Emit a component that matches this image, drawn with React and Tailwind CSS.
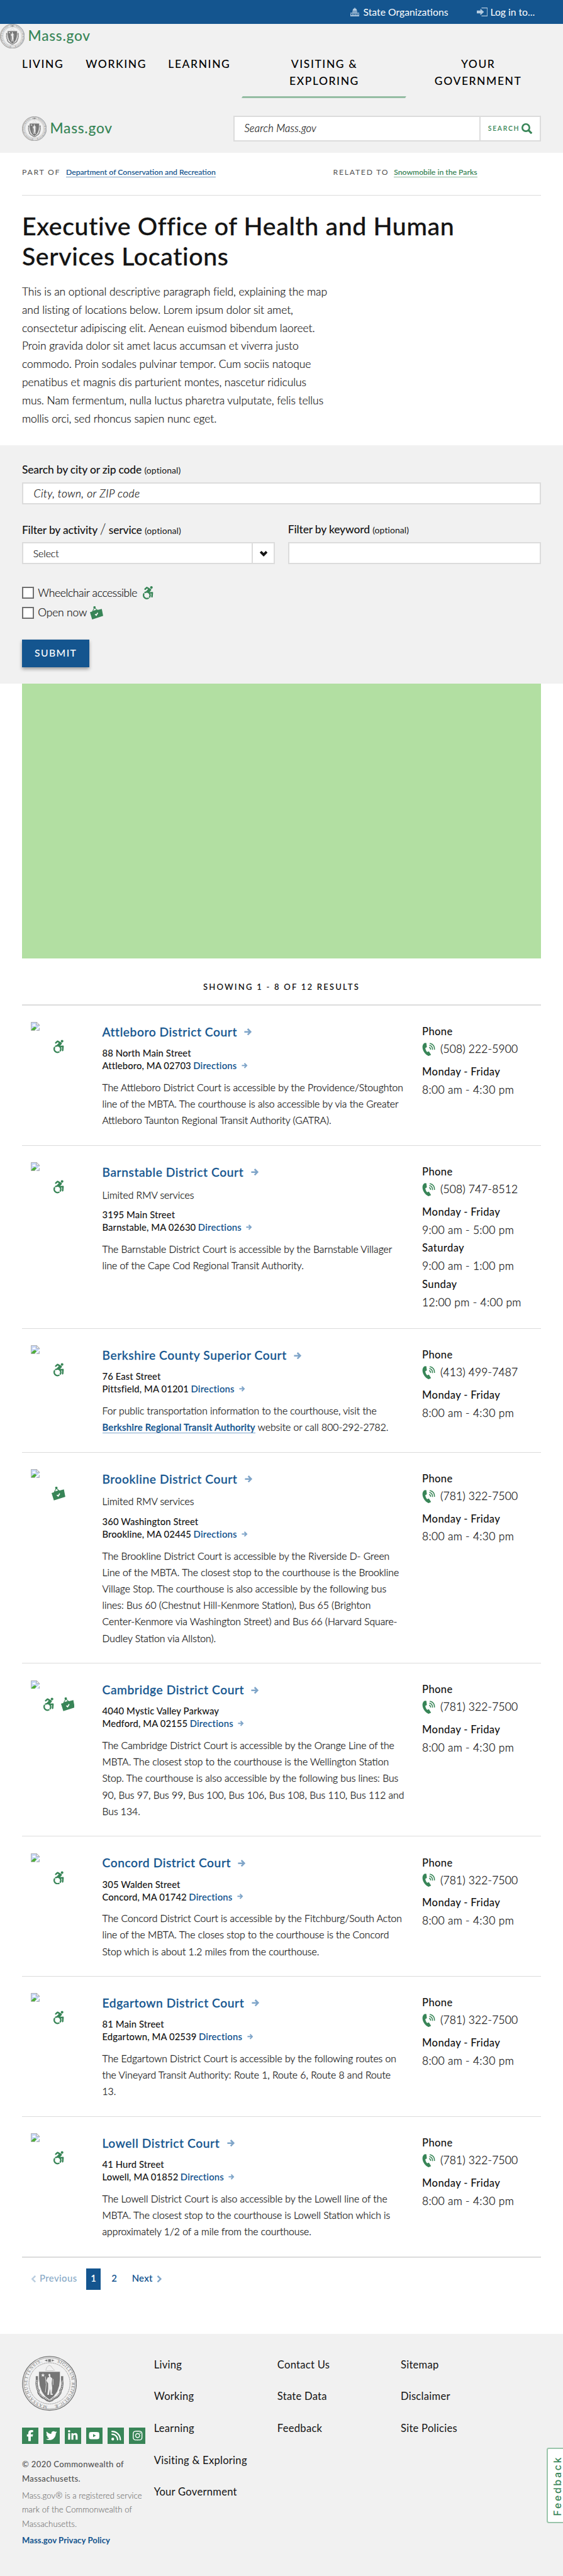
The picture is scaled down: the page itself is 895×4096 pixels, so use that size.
import React from "react";
import { FaAccessibleIcon, FaFacebookF, FaTwitter, FaLinkedinIn, FaYoutube, FaRss, FaInstagram } from "react-icons/fa6";

function Seal({ className, detailed }) {
  return (
    <svg viewBox="0 0 100 100" className={className} fill="none" stroke="#767676">
      <circle cx="50" cy="50" r="49" strokeWidth="1.5" fill={detailed ? "none" : "#e4e4e4"} />
      <circle cx="50" cy="50" r="46.6" strokeWidth="0.7" />
      <circle cx="50" cy="50" r="37.4" strokeWidth="1.1" strokeDasharray="1 0.8" fill="#f1f1f1" />
      <path id="seal-ring" d="M50 90.6A40.6 40.6 0 1 1 50.1 90.6" stroke="none" />
      <text fill="#767676" stroke="none" className="font-['Liberation_Serif'] text-[8.2px]">
        <textPath href="#seal-ring" startOffset="4" textLength="110">MASSACHUSETTENSIS.</textPath>
        <textPath href="#seal-ring" startOffset="141" textLength="104">SIGILLUM REIPUBLICÆ</textPath>
      </text>
      <path d="M41 8.2l5-2v4zM59 8.2l-5-2v4zM47.500 6h5v5h-5z" fill="#767676" stroke="none" />
      <path d="M43 27q1-7 6-10q5 1 6 5l5 5M44 27h14" strokeWidth="0.9" opacity="0.45" />
      <path d="M27 37v9q-1 4 0 8q1 8 3 9q-1 5 3 8q3 5 8 6q4 4 9 5q5-1 9-5q6-2 8-6q4-4 3-8q3-3 3-9q1-4 0-8v-9" strokeWidth="4" />
      <path d="M27 44v3q-1 4 0 8q1 7 3 8q0 5 4 8q3 4 7 5q5 4 9 5q5-1 9-5q5-2 7-5q4-3 4-8q2-3 3-8v-11" strokeWidth="1.3" stroke="#f1f1f1" strokeDasharray="2 1.2" />
      <path d="M30.500 28.500H69.500V42Q69 69 50 80Q31 69 30.500 42Z" fill="#767676" stroke="#f1f1f1" strokeWidth="1" />
      <path d="M38 31.500l1 2.500h2.700l-2.200 1.700.9 2.700-2.400-1.700-2.300 1.700.9-2.700-2.200-1.700H37z" fill="#f1f1f1" stroke="none" />
      <path d="M48 34q2-2.500 3.500 0v4l3.500 3-1 9 1 8-1 11h2v2h-4l-1-11-2 11h-3l1.500-11v-10l-3.500-5 3-6h2.500z" fill="#ececec" stroke="none" />
      <path d="M42.500 37.500q3 15 0 29M56.500 42v11" stroke="#ececec" strokeWidth="0.9" />
    </svg>
  );
}

function Arrow({ className }) {
  return (
    <svg viewBox="0 0 14 14" className={className} fill="none" stroke="#7fa5c9" strokeWidth="3.200">
      <path d="M0 7h12M6.500 1.200L12.200 7l-5.700 5.800" />
    </svg>
  );
}

function OpenSign({ className }) {
  return (
    <svg viewBox="0 0 24 24" className={className} fill="#388557">
      <circle cx="8.300" cy="2" r="2.100" />
      <path d="M8 3L4.800 9M8.600 3l4.600 4" stroke="#388557" strokeWidth="1.200" fill="none" />
      <path d="M0 11l3.500-1.200 1.200-1.300 8-2.500 1.500.6L21.500 4.800 24 17.500 4 24z" />
      <path d="M9.300 14.500l2.200 1.800 2.700-4.500" stroke="#fff" strokeWidth="1.900" fill="none" />
    </svg>
  );
}

function PhoneIcon() {
  return (
    <svg viewBox="0 0 24 24" className="h-[24px] w-[24px]" fill="#388557">
      <path d="M5 .4C1.500 2 .3 5.600.8 9.500c.8 6 5.200 12 10.200 14.200.8.3 1.500.3 2.200-.1l3.200-1.700-4-6.200-3.200 1.300c-1.800-2-3-4.500-3.400-7.200L8.700 8 7.800.5z" />
      <path d="M12.800 8.200q2.800.6 2.800 4.300M13.200 4.600q6 1.200 5.800 8.200M14 1.200q9 2 8.600 11.300" fill="none" stroke="#388557" strokeWidth="1.700" />
    </svg>
  );
}

function BrokenImage() {
  return (
    <svg viewBox="0 0 16 16" className="h-[16px] w-[16px]">
      <path d="M.5.500h10l5 5v10H.5z" fill="#c6d6f6" stroke="#a3a3a3" />
      <path d="M3 7q0-2.500 2-2.500 1-1.500 2.500 0 1.500.3 1 2.500z" fill="#fff" />
      <path d="M1 15q1-4 6-6 2 0 3.500 2L7 15z" fill="#4fae37" />
      <path d="M16 7L7 16h2.500L16 10z" fill="#fff" />
      <path d="M10.500.500v5h5z" fill="#fff" stroke="#a3a3a3" />
    </svg>
  );
}

function Wordmark() {
  return (
    <div className="flex h-[45px] items-center">
      <Seal className="h-[45px] w-[45px]" />
      <span className="ml-[6px] mt-[-1px] text-[26px] font-medium leading-[45px] tracking-[0.85px] text-[#388557]">Mass.gov</span>
    </div>
  );
}

const courts = [
  {
    name: "Attleboro District Court", icons: ["wheel"], street: "88 North Main Street", city: "Attleboro, MA 02703",
    lines: ["The Attleboro District Court is accessible by the Providence/Stoughton", "line of the MBTA. The courthouse is also accessible by via the Greater", "Attleboro Taunton Regional Transit Authority (GATRA)."],
    phone: "(508) 222-5900",
  },
  {
    name: "Barnstable District Court", icons: ["wheel"], limited: true, street: "3195 Main Street", city: "Barnstable, MA 02630",
    lines: ["The Barnstable District Court is accessible by the Barnstable Villager", "line of the Cape Cod Regional Transit Authority."],
    phone: "(508) 747-8512",
    hours: [["Monday - Friday", "9:00 am - 5:00 pm"], ["Saturday", "9:00 am - 1:00 pm"], ["Sunday", "12:00 pm - 4:00 pm"]],
  },
  {
    name: "Berkshire County Superior Court", icons: ["wheel"], street: "76 East Street", city: "Pittsfield, MA 01201",
    lines: ["For public transportation information to the courthouse, visit the",
      <><span className="border-b-[1.200px] border-[#7fa5c9] text-[17px] font-semibold tracking-[0.250px] text-[#14558f]">Berkshire Regional Transit Authority</span> website or call 800-292-2782.</>],
    phone: "(413) 499-7487",
  },
  {
    name: "Brookline District Court", icons: ["sign"], limited: true, street: "360 Washington Street", city: "Brookline, MA 02445",
    lines: ["The Brookline District Court is accessible by the Riverside D- Green", "Line of the MBTA. The closest stop to the courthouse is the Brookline", "Village Stop. The courthouse is also accessible by the following bus", "lines: Bus 60 (Chestnut Hill-Kenmore Station), Bus 65 (Brighton", "Center-Kenmore via Washington Street) and Bus 66 (Harvard Square-", "Dudley Station via Allston)."],
    phone: "(781) 322-7500",
  },
  {
    name: "Cambridge District Court", icons: ["wheel", "sign"], street: "4040 Mystic Valley Parkway", city: "Medford, MA 02155",
    lines: ["The Cambridge District Court is accessible by the Orange Line of the", "MBTA. The closest stop to the courthouse is the Wellington Station", "Stop. The courthouse is also accessible by the following bus lines: Bus", "90, Bus 97, Bus 99, Bus 100, Bus 106, Bus 108, Bus 110, Bus 112 and", "Bus 134."],
    phone: "(781) 322-7500",
  },
  {
    name: "Concord District Court", icons: ["wheel"], street: "305 Walden Street", city: "Concord, MA 01742",
    lines: ["The Concord District Court is accessible by the Fitchburg/South Acton", "line of the MBTA. The closes stop to the courthouse is the Concord", "Stop which is about 1.2 miles from the courthouse."],
    phone: "(781) 322-7500",
  },
  {
    name: "Edgartown District Court", icons: ["wheel"], street: "81 Main Street", city: "Edgartown, MA 02539",
    lines: ["The Edgartown District Court is accessible by the following routes on", "the Vineyard Transit Authority: Route 1, Route 6, Route 8 and Route", "13."],
    phone: "(781) 322-7500",
  },
  {
    name: "Lowell District Court", icons: ["wheel"], street: "41 Hurd Street", city: "Lowell, MA 01852",
    lines: ["The Lowell District Court is also accessible by the Lowell line of the", "MBTA. The closest stop to the courthouse is Lowell Station which is", "approximately 1/2 of a mile from the courthouse."],
    phone: "(781) 322-7500",
  },
];

function CourtRow({ court }) {
  const hours = court.hours || [["Monday - Friday", "8:00 am - 4:30 pm"]];
  return (
    <article className="flex border-t-[1.200px] border-[#dcdcdc] pb-[30.300px] pt-[30px] first:border-t-[2.300px]">
      <div className="w-[146px] shrink-0 pl-[16px]">
        <BrokenImage />
        <div className="mt-[16px] flex w-[101px] items-center justify-center gap-[12px]">
          {court.icons.map((i) =>
            i === "wheel"
              ? <FaAccessibleIcon key={i} className="h-[25px] w-[21px] text-[#388557]" />
              : <OpenSign key={i} className="h-[25px] w-[25px]" />
          )}
        </div>
      </div>
      <div className="w-[582px] shrink-0 pt-[3px]">
        <h2 className="flex items-center gap-[13px] text-[22px] font-medium leading-[30px] tracking-[0.650px] text-[#14558f] [-webkit-text-stroke:0.3px]">
          {court.name}<Arrow className="h-[13px] w-[14px]" />
        </h2>
        {court.limited && <p className="mb-[-2px] mt-[11px] text-[18px] font-light leading-[30px] [-webkit-text-stroke:0.3px]">Limited RMV services</p>}
        <p className="mt-[11.500px] text-[17px] font-medium leading-[23px] tracking-[0.1px]">{court.street}</p>
        <p className="flex items-center text-[17px] font-medium leading-[23px] tracking-[0.1px]">
          {court.city}
          <span className="ml-[4px] font-semibold tracking-[0.2px] text-[#14558f]">Directions</span>
          <Arrow className="ml-[8.500px] h-[10px] w-[11px]" />
        </p>
        <div className="mt-[13px] text-[18px] font-light leading-[30px] [-webkit-text-stroke:0.3px]">
          {court.lines.map((l, i) => <p key={i} className="whitespace-nowrap">{l}</p>)}
        </div>
      </div>
      <div className="pt-[1px] leading-[33px]">
        <p className="h-[32px] text-[19px] font-medium tracking-[0.4px]">Phone</p>
        <p className="mb-[8px] flex h-[33px] items-center gap-[9px] text-[20px] font-light tracking-[0.15px] [-webkit-text-stroke:0.3px]"><PhoneIcon />{court.phone}</p>
        {hours.map(([d, h]) => (
          <div key={d}>
            <p className="text-[19px] font-medium tracking-[0.4px]">{d}</p>
            <p className="text-[20px] font-light tracking-[0.35px] [-webkit-text-stroke:0.3px]">{h}</p>
          </div>
        ))}
      </div>
    </article>
  );
}

const social = [FaFacebookF, FaTwitter, FaLinkedinIn, FaYoutube, FaRss, FaInstagram];
const footerLinks = [
  ["Living", "Working", "Learning", "Visiting & Exploring", "Your Government"],
  ["Contact Us", "State Data", "Feedback"],
  ["Sitemap", "Disclaimer", "Site Policies"],
];

function Optional() {
  return <span className="ml-[5px] text-[16px] font-normal tracking-[0.1px]">(optional)</span>;
}

function Label({ children }) {
  return <div className="flex h-[24px] items-baseline whitespace-nowrap text-[20px] font-medium leading-[24px] tracking-[-0.200px]">{children}<Optional /></div>;
}

export default function App() {
  return (
    <div className="relative flex h-[4687.500px] flex-col overflow-hidden bg-white font-[Lato,sans-serif] text-[#141414] [zoom:0.8738]">
      <div className="flex h-[43px] shrink-0 items-center bg-[#14558f] pl-[638px] text-[18px] leading-[43px] text-white">
        <svg viewBox="0 0 16 16" className="h-[16px] w-[16px]" fill="#b4cbe0">
          <path d="M7.500 0h1v1.500h-1zM4 6q.5-4.500 4-4.500T12 6zM4 7h1.300v3H4zM6.300 7h1.300v3H6.300zM8.600 7h1.300v3H8.600zM10.800 7H12v3h-1.200zM3.500 6.500h9v1h-9zM0 9.500h16v1.300H0zM0 11.500h1.300V15H0zM3 11.500h1.300V15H3zM5.800 11.500h1.300V15H5.800zM8.800 11.500h1.300V15H8.800zM11.600 11.500H13V15h-1.400zM14.700 11.500H16V15h-1.300zM0 14h16v2H0z" />
        </svg>
        <span className="ml-[7px] w-[206px]">State Organizations</span>
        <svg viewBox="0 0 20 16" className="h-[16px] w-[20px]" fill="#b4cbe0">
          <path d="M0 5.500h6.500V2L13 8l-6.500 6v-3.500H0zM8.500 0H20v16H8.500v-1.400h10V1.400h-10z" />
        </svg>
        <span className="ml-[5px]">Log in to...</span>
      </div>

      <header className="h-[235px] shrink-0 bg-[#f1f1f1]">
        <Wordmark />
        <nav className="flex h-[90px] pl-[40px] pt-[13px] text-[20px] font-medium leading-[31px] tracking-[1.800px] text-black">
          <span className="w-[116px]">LIVING</span>
          <span className="w-[150px]">WORKING</span>
          <span className="w-[135px]">LEARNING</span>
          <div className="flex w-[298px] flex-col justify-between text-center">
            <span>VISITING &amp;<br />EXPLORING</span>
            <span className="h-[3px] -skew-x-[30deg] bg-[#94bda3]" />
          </div>
          <span className="w-[262px] text-center">YOUR<br />GOVERNMENT</span>
        </nav>
        <div className="mt-[33px] flex items-center pl-[40px]">
          <Wordmark />
          <div className="ml-auto mr-[40px] flex h-[46px] w-[560px] border-[2.300px] border-[#dcdcdc] bg-white">
            <span className="w-[446px] pl-[18px] text-[19px] font-light italic leading-[42px] tracking-[0.2px] [-webkit-text-stroke:0.25px]">Search Mass.gov</span>
            <div className="flex flex-1 items-center border-l-[2.300px] border-[#dcdcdc] pl-[13px] text-[12px] font-semibold leading-[42px] tracking-[1.900px] text-[#388557]">
              SEARCH
              <svg viewBox="0 0 20 20" className="ml-[3px] h-[20px] w-[20px]" fill="none" stroke="#388557">
                <circle cx="8" cy="8" r="6.500" strokeWidth="3" />
                <path d="M12.500 12.500l6 6" strokeWidth="3.500" />
              </svg>
            </div>
          </div>
        </div>
      </header>

      <div className="mx-[40px] flex h-[78px] shrink-0 items-center border-b-[1.200px] border-[#dcdcdc] pb-[5px] text-[14px]">
        <div className="flex w-[566px] items-center gap-[10px]">
          <span className="tracking-[2px] text-[#535353]">PART OF</span>
          <span className="border-b-[1.200px] border-[#7b9fc0] font-medium leading-[16px] text-[#14558f] [-webkit-text-stroke:0.15px]">Department of Conservation and Recreation</span>
        </div>
        <div className="flex items-center gap-[9px]">
          <span className="tracking-[2px] text-[#535353]">RELATED TO</span>
          <span className="border-b-[1.200px] border-[#8fba9f] font-medium leading-[16px] text-[#388557] [-webkit-text-stroke:0.15px]">Snowmobile in the Parks</span>
        </div>
      </div>

      <section className="h-[454px] shrink-0 px-[40px] pt-[27px]">
        <h1 className="text-[45px] font-medium leading-[55px] tracking-[0.700px] [-webkit-text-stroke:0.3px]">Executive Office of Health and Human<br />Services Locations</h1>
        <p className="mt-[22px] whitespace-nowrap text-[20px] font-light leading-[33px] tracking-[-0.060px] [-webkit-text-stroke:0.25px]">
          This is an optional descriptive paragraph field, explaining the map<br />
          and listing of locations below. Lorem ipsum dolor sit amet,<br />
          consectetur adipiscing elit. Aenean euismod bibendum laoreet.<br />
          Proin gravida dolor sit amet lacus accumsan et viverra justo<br />
          commodo. Proin sodales pulvinar tempor. Cum sociis natoque<br />
          penatibus et magnis dis parturient montes, nascetur ridiculus<br />
          mus. Nam fermentum, nulla luctus pharetra vulputate, felis tellus<br />
          mollis orci, sed rhoncus sapien nunc eget.
        </p>
      </section>

      <section className="h-[434px] shrink-0 bg-[#f1f1f1] px-[40px] pt-[34px]">
        <Label>Search by city or zip code</Label>
        <div className="mt-[10px] h-[40px] w-[944px] border-[2.300px] border-[#dcdcdc] bg-white pl-[19px] text-[20px] font-light italic leading-[36px] tracking-[0.450px] [-webkit-text-stroke:0.25px]">City, town, or ZIP code</div>
        <div className="mt-[34px] flex gap-[24px]">
          <div className="w-[460px]">
            <Label>Filter by activity&nbsp;<span className="text-[26px] font-light leading-[20px]">/</span>&nbsp;service</Label>
            <div className="mt-[11px] flex h-[40px] border-[2.300px] border-[#dcdcdc] bg-white">
              <span className="w-[416px] pl-[18px] text-[18px] font-light leading-[36px] [-webkit-text-stroke:0.25px]">Select</span>
              <div className="flex flex-1 items-center justify-center border-l-[2.300px] border-[#dcdcdc]">
                <svg viewBox="0 0 14 10" className="mt-[2px] h-[10px] w-[14px]" fill="none" stroke="#141414" strokeWidth="4.500">
                  <path d="M1.500 1.500L7 7l5.500-5.500" />
                </svg>
              </div>
            </div>
          </div>
          <div className="w-[460px]">
            <Label>Filter by keyword</Label>
            <div className="mt-[11px] h-[40px] border-[2.300px] border-[#dcdcdc] bg-white" />
          </div>
        </div>
        <div className="mt-[41px] flex h-[22px] items-center text-[20px] font-light tracking-[-0.400px] [-webkit-text-stroke:0.25px]">
          <span className="mr-[7px] h-[22px] w-[22px] border-[2.300px] border-[#707070] bg-white" />
          Wheelchair accessible
          <FaAccessibleIcon className="ml-[9px] h-[24px] w-[21px] text-[#388557]" />
        </div>
        <div className="mt-[14px] flex h-[22px] items-center text-[20px] font-light tracking-[-0.200px] [-webkit-text-stroke:0.25px]">
          <span className="mr-[7px] h-[22px] w-[22px] border-[2.300px] border-[#707070] bg-white" />
          Open now
          <OpenSign className="ml-[6px] h-[24px] w-[24px]" />
        </div>
        <div className="mt-[38px] h-[50px] w-[123px] bg-[#14558f] pl-[23px] text-[18px] font-medium leading-[49px] tracking-[1.600px] text-white shadow-[0_3px_6px_rgba(0,0,0,0.35)]">SUBMIT</div>
      </section>

      <div className="mx-[40px] h-[500px] w-[944px] shrink-0 bg-[#b2dfa2]" />

      <div className="h-[84px] shrink-0 pt-[37px] text-center text-[15px] font-semibold leading-[32px] tracking-[2.500px]">SHOWING 1 - 8 OF 12 RESULTS</div>

      <main className="mx-[40px] w-[944px] shrink-0 border-b-[2.300px] border-[#dcdcdc]">
        {courts.map((c) => <CourtRow key={c.name} court={c} />)}
      </main>

      <div className="flex h-[139px] shrink-0 items-start pl-[56px] pt-[20px] text-[17px] font-semibold leading-[35px] text-[#14558f]">
        <svg viewBox="0 0 10 14" className="mt-[12px] h-[13px] w-[10px]" fill="none" stroke="#b9cddf" strokeWidth="3"><path d="M8.500 1L2.500 7l6 6" /></svg>
        <span className="ml-[6px] w-[85px] font-medium tracking-[0.5px] text-[#89aac7]">Previous</span>
        <span className="h-[39px] w-[26px] bg-[#14558f] text-center text-white">1</span>
        <span className="ml-[20px] w-[37px]">2</span>
        <span className="tracking-[0.3px]">Next</span>
        <svg viewBox="0 0 10 14" className="ml-[7px] mt-[12px] h-[13px] w-[10px]" fill="none" stroke="#7fa5c9" strokeWidth="3"><path d="M1.500 1l6 6-6 6" /></svg>
      </div>

      <footer className="flex flex-1 bg-[#f1f1f1] pl-[40px] pt-[40px]">
        <div className="w-[240px] shrink-0">
          <Seal className="h-[100px] w-[100px]" detailed />
          <div className="mt-[30px] flex gap-[9px]">
            {social.map((Icon, i) => (
              <span key={i} className="flex h-[30px] w-[30px] items-center justify-center bg-[#388557] text-white"><Icon className="h-[20px] w-[20px]" /></span>
            ))}
          </div>
          <p className="mt-[24px] whitespace-nowrap text-[15px] font-medium leading-[26px] tracking-[0.400px] text-[#535353]">© 2020 Commonwealth of<br />Massachusetts.</p>
          <p className="mt-[5px] whitespace-nowrap text-[15px] font-light leading-[26px] tracking-[0.100px] text-[#707070] [-webkit-text-stroke:0.15px]">Mass.gov® is a registered service<br />mark of the Commonwealth of<br />Massachusetts.</p>
          <p className="mt-[4px] text-[15px] font-bold leading-[26px] tracking-[0.100px] text-[#14558f]">Mass.gov Privacy Policy</p>
        </div>
        {footerLinks.map((col) => (
          <div key={col[0]} className="flex w-[224.500px] shrink-0 flex-col gap-[32px] pt-[3px] text-[19px] leading-[26px] tracking-[0.300px]">
            {col.map((l) => <span key={l}>{l}</span>)}
          </div>
        ))}
      </footer>

      <div className="absolute right-[-6px] top-[4454px] flex h-[138px] w-[36px] justify-center rounded-l-[4px] border-[3px] border-[#9bc5ab] bg-white">
        <span className="mr-[-4px] rotate-180 text-center font-[Inter] text-[18px] font-medium leading-[22px] tracking-[3.200px] text-[#388557] [writing-mode:vertical-rl]">Feedback</span>
      </div>
    </div>
  );
}
